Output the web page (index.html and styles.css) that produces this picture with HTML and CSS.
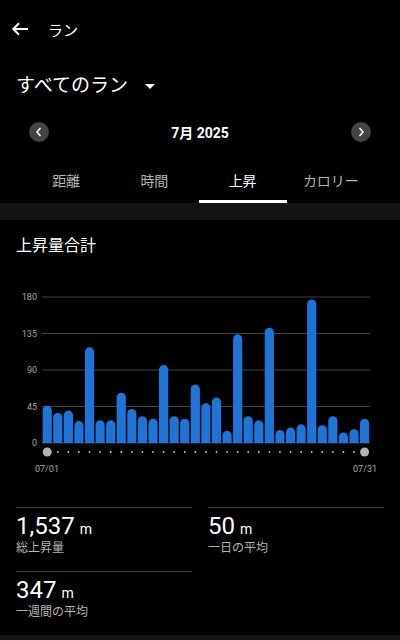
FILE: index.html
```html
<!DOCTYPE html>
<html>
<head>
    <title>ラン</title>
    <link rel="stylesheet" href="styles.css">
</head>
<body>
    <div class="app">
        <div class="top-bar">
            <svg class="back-icon" width="18" height="14" viewBox="0 0 18 14">
                <path d="M17 7H2.5M8 1.3L2.3 7 8 12.7" fill="none" stroke="#fff" stroke-width="2"/>
            </svg>
            <span class="top-title">ラン</span>
        </div>

        <div class="filter-row">
            <span class="filter-title">すべてのラン</span>
            <svg class="caret" width="10" height="5" viewBox="0 0 10 5"><path d="M0 0h10L5 5z" fill="#fff"/></svg>
        </div>

        <div class="month-nav">
            <button class="nav-btn">
                <svg width="8" height="10" viewBox="0 0 8 10"><path d="M5.5 1L2 5l3.5 4" fill="none" stroke="#fff" stroke-width="1.5"/></svg>
            </button>
            <span class="month-label">7月 2025</span>
            <button class="nav-btn">
                <svg width="8" height="10" viewBox="0 0 8 10"><path d="M2.5 1L6 5 2.5 9" fill="none" stroke="#fff" stroke-width="1.5"/></svg>
            </button>
        </div>

        <div class="tabs">
            <div class="tab">距離</div>
            <div class="tab">時間</div>
            <div class="tab active">上昇</div>
            <div class="tab">カロリー</div>
        </div>

        <div class="divider"></div>

        <div class="chart-section">
            <h2 class="section-title">上昇量合計</h2>

            <svg class="chart" width="400" height="190" viewBox="0 0 400 190">
                <defs>
                    <clipPath id="plot"><rect x="0" y="0" width="400" height="158"/></clipPath>
                </defs>
                <!-- grid -->
                <g stroke="#454545" stroke-width="1">
                    <line x1="42" y1="12" x2="370" y2="12"/>
                    <line x1="42" y1="48.5" x2="370" y2="48.5"/>
                    <line x1="42" y1="85" x2="370" y2="85"/>
                    <line x1="42" y1="121.5" x2="370" y2="121.5"/>
                    <line x1="42" y1="158" x2="370" y2="158"/>
                </g>
                <g class="axis-label" text-anchor="end">
                    <text x="37" y="15.2">180</text>
                    <text x="37" y="51.7">135</text>
                    <text x="37" y="88.2">90</text>
                    <text x="37" y="124.7">45</text>
                    <text x="37" y="161.2">0</text>
                </g>
                <!-- bars -->
                <g fill="#1f74d8" clip-path="url(#plot)">
                    <rect x="42.6" y="120.7" width="9.2" height="44" rx="4.6"/>
                    <rect x="53.18" y="128" width="9.2" height="44" rx="4.6"/>
                    <rect x="63.76" y="125.6" width="9.2" height="44" rx="4.6"/>
                    <rect x="74.34" y="136.1" width="9.2" height="44" rx="4.6"/>
                    <rect x="84.92" y="62.3" width="9.2" height="110" rx="4.6"/>
                    <rect x="95.5" y="135.3" width="9.2" height="44" rx="4.6"/>
                    <rect x="106.08" y="135.3" width="9.2" height="44" rx="4.6"/>
                    <rect x="116.66" y="107.7" width="9.2" height="60" rx="4.6"/>
                    <rect x="127.24" y="123.9" width="9.2" height="44" rx="4.6"/>
                    <rect x="137.82" y="131.2" width="9.2" height="44" rx="4.6"/>
                    <rect x="148.4" y="133.7" width="9.2" height="44" rx="4.6"/>
                    <rect x="158.98" y="80.1" width="9.2" height="90" rx="4.6"/>
                    <rect x="169.56" y="131.2" width="9.2" height="44" rx="4.6"/>
                    <rect x="180.14" y="133.7" width="9.2" height="44" rx="4.6"/>
                    <rect x="190.72" y="99.6" width="9.2" height="70" rx="4.6"/>
                    <rect x="201.3" y="118.3" width="9.2" height="50" rx="4.6"/>
                    <rect x="211.88" y="112.6" width="9.2" height="50" rx="4.6"/>
                    <rect x="222.46" y="145.8" width="9.2" height="44" rx="4.6"/>
                    <rect x="233.04" y="49.3" width="9.2" height="120" rx="4.6"/>
                    <rect x="243.62" y="131.2" width="9.2" height="44" rx="4.6"/>
                    <rect x="254.2" y="135.3" width="9.2" height="44" rx="4.6"/>
                    <rect x="264.78" y="42.8" width="9.2" height="120" rx="4.6"/>
                    <rect x="275.36" y="145" width="9.2" height="44" rx="4.6"/>
                    <rect x="285.94" y="142.6" width="9.2" height="44" rx="4.6"/>
                    <rect x="296.52" y="139.3" width="9.2" height="44" rx="4.6"/>
                    <rect x="307.1" y="14.4" width="9.2" height="150" rx="4.6"/>
                    <rect x="317.68" y="140.2" width="9.2" height="44" rx="4.6"/>
                    <rect x="328.26" y="131.2" width="9.2" height="44" rx="4.6"/>
                    <rect x="338.84" y="147.5" width="9.2" height="44" rx="4.6"/>
                    <rect x="349.42" y="144.2" width="9.2" height="44" rx="4.6"/>
                    <rect x="360" y="133.7" width="9.2" height="44" rx="4.6"/>
                </g>
                <!-- day ticks -->
                <g fill="#c8c8c8">
                    <circle cx="47.2" cy="167" r="4.5" fill="#b4b4b4"/>
                    <circle cx="57.78" cy="167" r="0.9"/>
                    <circle cx="68.36" cy="167" r="0.9"/>
                    <circle cx="78.94" cy="167" r="0.9"/>
                    <circle cx="89.52" cy="167" r="0.9"/>
                    <circle cx="100.1" cy="167" r="0.9"/>
                    <circle cx="110.68" cy="167" r="0.9"/>
                    <circle cx="121.26" cy="167" r="0.9"/>
                    <circle cx="131.84" cy="167" r="0.9"/>
                    <circle cx="142.42" cy="167" r="0.9"/>
                    <circle cx="153" cy="167" r="0.9"/>
                    <circle cx="163.58" cy="167" r="0.9"/>
                    <circle cx="174.16" cy="167" r="0.9"/>
                    <circle cx="184.74" cy="167" r="0.9"/>
                    <circle cx="195.32" cy="167" r="0.9"/>
                    <circle cx="205.9" cy="167" r="0.9"/>
                    <circle cx="216.48" cy="167" r="0.9"/>
                    <circle cx="227.06" cy="167" r="0.9"/>
                    <circle cx="237.64" cy="167" r="0.9"/>
                    <circle cx="248.22" cy="167" r="0.9"/>
                    <circle cx="258.8" cy="167" r="0.9"/>
                    <circle cx="269.38" cy="167" r="0.9"/>
                    <circle cx="279.96" cy="167" r="0.9"/>
                    <circle cx="290.54" cy="167" r="0.9"/>
                    <circle cx="301.12" cy="167" r="0.9"/>
                    <circle cx="311.7" cy="167" r="0.9"/>
                    <circle cx="322.28" cy="167" r="0.9"/>
                    <circle cx="332.86" cy="167" r="0.9"/>
                    <circle cx="343.44" cy="167" r="0.9"/>
                    <circle cx="354.02" cy="167" r="0.9"/>
                    <circle cx="364.6" cy="167" r="4.5" fill="#b4b4b4"/>
                </g>
                <text class="axis-label" x="35" y="187">07/01</text>
                <text class="axis-label" x="377" y="187" text-anchor="end">07/31</text>
            </svg>
        </div>

        <div class="stats">
            <div class="stat">
                <div class="stat-value">1,537<span class="unit">m</span></div>
                <div class="stat-label">総上昇量</div>
            </div>
            <div class="stat">
                <div class="stat-value">50<span class="unit">m</span></div>
                <div class="stat-label">一日の平均</div>
            </div>
            <div class="stat">
                <div class="stat-value">347<span class="unit">m</span></div>
                <div class="stat-label">一週間の平均</div>
            </div>
        </div>

        <div class="divider bottom"></div>
    </div>
</body>
</html>
```

FILE: styles.css
```css
body {
    margin: 0;
    background: #000;
    color: #fff;
    font-family: Roboto, "Noto Sans CJK JP", sans-serif;
}
.app {
    width: 400px;
}
.top-bar {
    height: 58px;
    display: flex;
    align-items: center;
    padding-left: 11px;
}
.back-icon {
    display: block;
}
.top-title {
    margin-left: 19px;
    font-size: 15px;
}
.filter-row {
    height: 56px;
    display: flex;
    align-items: center;
    padding-left: 16px;
}
.filter-title {
    font-size: 19px;
    line-height: 28px;
}
.caret {
    margin-left: 17px;
    display: block;
}
.month-nav {
    height: 36px;
    display: flex;
    align-items: center;
    justify-content: space-between;
    padding: 0 29px;
}
.nav-btn {
    width: 20px;
    height: 20px;
    border-radius: 50%;
    border: none;
    padding: 0;
    background: #444;
    display: flex;
    align-items: center;
    justify-content: center;
}
.nav-btn svg {
    display: block;
}
.month-label {
    font-size: 14px;
    font-weight: bold;
}
.tabs {
    display: flex;
    padding: 0 25px 0 22px;
}
.tab {
    flex: 1;
    text-align: center;
    font-size: 14px;
    line-height: 20px;
    padding: 21px 0 9px;
    color: #b4b4b4;
    border-bottom: 3px solid transparent;
}
.tab.active {
    color: #fff;
    border-bottom-color: #fff;
}
.divider {
    height: 17px;
    background: #141414;
}
.divider.bottom {
    height: 5px;
}
.chart-section {
    padding-top: 14px;
}
.section-title {
    margin: 0 0 27px 16px;
    font-size: 16px;
    font-weight: normal;
    line-height: 24px;
}
.chart {
    display: block;
}
.axis-label {
    font-size: 9px;
    fill: #a6a6a6;
}
.stats {
    display: grid;
    grid-template-columns: 1fr 1fr;
    column-gap: 16px;
    padding: 0 16px;
    margin-top: 32px;
}
.stat {
    border-top: 1px solid #3c3c3c;
    padding: 4px 0 15px;
}
.stat-value {
    font-size: 24px;
    line-height: 28px;
}
.unit {
    font-size: 14px;
    line-height: 1;
    margin-left: 5px;
}
.stat-label {
    font-size: 12px;
    line-height: 16px;
    color: #b4b4b4;
}
```
